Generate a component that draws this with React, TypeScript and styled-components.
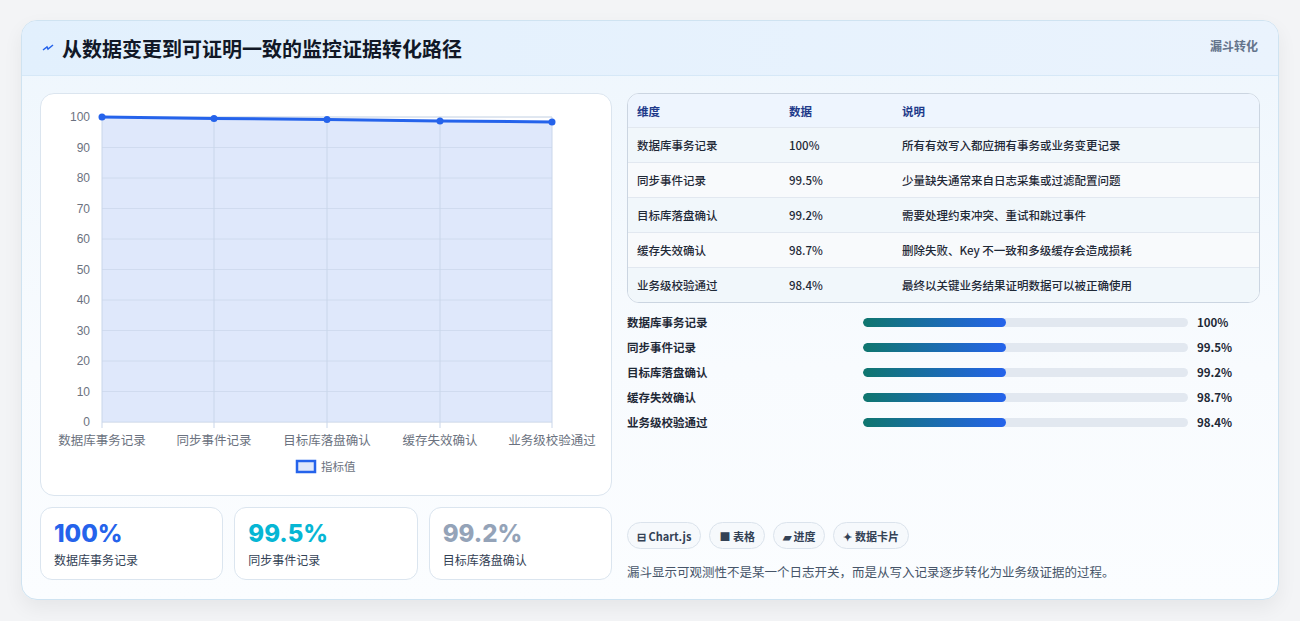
import React from "react";
import styled, { createGlobalStyle } from "styled-components";

const G = createGlobalStyle`
  body{margin:0;background:#f3f4f6;font-family:"Noto Sans CJK SC","Noto Sans",sans-serif;}
`;
const Page = styled.div`padding:20px 21px 21px 21px;height:621px;box-sizing:border-box;`;
const Card = styled.div`
  height:580px;box-sizing:border-box;border:1px solid #cfe3f1;border-radius:16px;overflow:hidden;
  background:linear-gradient(180deg,#eef6fd 0%,#f8fbfe 60%,#fbfdff 100%);
  box-shadow:0 8px 20px rgba(0,0,0,.06);display:flex;flex-direction:column;`;
const Header = styled.div`
  height:55px;box-sizing:border-box;display:flex;align-items:center;justify-content:space-between;
  padding:0 20px 0 20px;background:linear-gradient(90deg,#e2f0fd,#eaf3fd);border-bottom:1px solid #d6e8f7;`;
const Title = styled.h1`margin:0;font-size:20px;font-weight:700;color:#111827;display:flex;align-items:center;gap:8px;`;
const Tag = styled.span`font-size:12px;font-weight:700;color:#64748b;align-self:flex-start;margin-top:16px;`;
const Body = styled.div`display:grid;grid-template-columns:572px 633px;gap:15px;padding:17px 0 0 18px;`;
const Col = styled.div`display:flex;flex-direction:column;gap:11px;`;
const ChartBox = styled.div`height:403px;box-sizing:border-box;background:#fff;border:1px solid #dbe5ef;border-radius:14px;`;
const Stats = styled.div`display:grid;grid-template-columns:repeat(3,1fr);gap:11px;`;
const Stat = styled.div`height:73px;box-sizing:border-box;background:#fff;border:1px solid #dbe5ef;border-radius:12px;padding:11px 13px;`;
const StatVal = styled.div<{c:string}>`font-family:"Inter",sans-serif;font-size:24px;font-weight:800;color:${p=>p.c};line-height:30px;`;
const StatLbl = styled.div`font-size:12px;color:#334155;margin-top:2px;`;
const Table = styled.div`border:1px solid #cbd5e1;border-radius:12px;overflow:hidden;background:#fff;`;
const Row = styled.div<{h?:boolean;alt?:boolean}>`
  display:grid;grid-template-columns:152px 113px 1fr;height:${p=>p.h?33:35}px;box-sizing:border-box;align-items:center;padding-left:9px;
  font-size:11.5px;font-weight:${p=>p.h?700:500};color:${p=>p.h?"#1e3a8a":"#1f2937"};
  background:${p=>p.h?"#eef5fe":p.alt?"#f8fafc":"#f1f7fb"};border-top:${p=>p.h?"none":"1px solid #e2e8f0"};`;
const Bars = styled.div`display:flex;flex-direction:column;gap:7px;margin-top:10px;`;
const BarRow = styled.div`display:grid;grid-template-columns:236px 325px 1fr;align-items:center;height:18px;font-size:11.5px;font-weight:700;color:#1f2937;`;
const Track = styled.div`height:9px;border-radius:5px;background:#e2e8f0;overflow:hidden;`;
const Fill = styled.div`height:100%;width:44%;border-radius:5px;background:linear-gradient(90deg,#0f766e,#2563eb);`;
const Val = styled.span`padding-left:9px;`;
const Chips = styled.div`display:flex;gap:8px;margin-top:91px;`;
const Chip = styled.span`height:27px;box-sizing:border-box;padding:0 9px;border:1px solid #dbe3ec;border-radius:14px;background:#f6f9fc;display:flex;align-items:center;font-size:11px;font-weight:700;color:#334155;gap:3px;`;
const Note = styled.p`margin:13px 0 0;font-size:12.5px;color:#475569;`;

const data=[["数据库事务记录",100,"所有有效写入都应拥有事务或业务变更记录"],["同步事件记录",99.5,"少量缺失通常来自日志采集或过滤配置问题"],["目标库落盘确认",99.2,"需要处理约束冲突、重试和跳过事件"],["缓存失效确认",98.7,"删除失败、Key 不一致和多级缓存会造成损耗"],["业务级校验通过",98.4,"最终以关键业务结果证明数据可以被正确使用"]] as const;

function Chart(){
  const xs=[61,173,286,399,511];const y=(v:number)=>328-v*3.05;
  const pts=data.map((d,i)=>`${xs[i]},${y(d[1] as number)}`).join(" ");
  return <svg width="572" height="403" style={{display:"block"}}>
    {Array.from({length:11},(_,i)=>i*10).map(v=><g key={v}>
      <line x1={61} x2={511} y1={y(v)} y2={y(v)} stroke="#dbe2ea"/>
      <text x={49} y={y(v)+4} textAnchor="end" fontSize="12" fill="#6b7280" fontFamily="Liberation Sans">{v}</text></g>)}
    <polygon points={`61,328 ${pts} 511,328`} fill="#dfe8fb"/>
    {xs.map(x=><line key={x} x1={x} x2={x} y1={y(100)} y2={334} stroke="#c9d6ea"/>)}
    {Array.from({length:11},(_,i)=>i*10).map(v=><line key={v} x1={61} x2={511} y1={y(v)} y2={y(v)} stroke="#c9d6ea" strokeOpacity="0.7"/>)}
    <polyline points={pts} fill="none" stroke="#2563eb" strokeWidth="3"/>
    {xs.map((x,i)=><circle key={x} cx={x} cy={y(data[i][1] as number)} r="3.5" fill="#2563eb"/>)}
    {data.map((d,i)=><text key={i} x={xs[i]} y={351} textAnchor="middle" fontSize="12.5" fill="#6b7280" fontFamily="Noto Sans CJK SC">{d[0]}</text>)}
    <rect x={256} y={367} width={18} height={11} fill="#dfe8fb" stroke="#2563eb" strokeWidth="2.5"/>
    <text x={280} y={377} fontSize="11.5" fill="#6b7280" fontFamily="Noto Sans CJK SC">指标值</text>
  </svg>;
}

export default function App(){
  return <Page><G/><Card>
    <Header><Title><svg width="12" height="12" viewBox="0 0 12 12"><path d="M1 8 L5 5 L6 7 L11 3" stroke="#2563eb" strokeWidth="1.5" fill="none"/></svg>从数据变更到可证明一致的监控证据转化路径</Title><Tag>漏斗转化</Tag></Header>
    <Body>
      <Col>
        <ChartBox><Chart/></ChartBox>
        <Stats>
          <Stat><StatVal c="#2563eb">100%</StatVal><StatLbl>数据库事务记录</StatLbl></Stat>
          <Stat><StatVal c="#06b6d4">99.5%</StatVal><StatLbl>同步事件记录</StatLbl></Stat>
          <Stat><StatVal c="#94a3b8">99.2%</StatVal><StatLbl>目标库落盘确认</StatLbl></Stat>
        </Stats>
      </Col>
      <div>
        <Table>
          <Row h><span>维度</span><span>数据</span><span>说明</span></Row>
          {data.map((d,i)=><Row key={i} alt={i%2===1}><span>{d[0]}</span><span>{d[1]}%</span><span>{d[2]}</span></Row>)}
        </Table>
        <Bars>{data.map((d,i)=><BarRow key={i}><span>{d[0]}</span><Track><Fill/></Track><Val>{d[1]}%</Val></BarRow>)}</Bars>
        <Chips><Chip>⊟ Chart.js</Chip><Chip>■ 表格</Chip><Chip>▰ 进度</Chip><Chip>✦ 数据卡片</Chip></Chips>
        <Note>漏斗显示可观测性不是某一个日志开关，而是从写入记录逐步转化为业务级证据的过程。</Note>
      </div>
    </Body>
  </Card></Page>;
}
